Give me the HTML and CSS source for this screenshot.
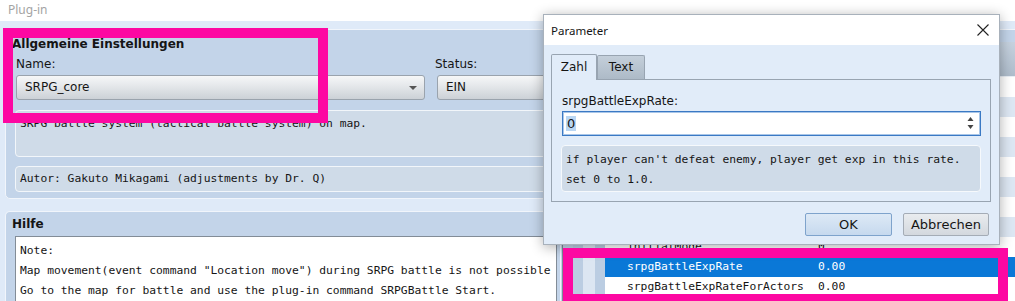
FILE: index.html
```html
<!DOCTYPE html>
<html lang="de">
<head>
  <meta charset="UTF-8">
  <title>Plug-in</title>
  <link rel="stylesheet" href="styles.css">
</head>
<body>
  <div class="titlebar">Plug-in</div>

  <div class="main">
    <div class="left">
      <section class="panel general">
        <h2>Allgemeine Einstellungen</h2>
        <div class="fields">
          <div class="field name-field">
            <label>Name:</label>
            <div class="combo">SRPG_core<span class="arrow"></span></div>
          </div>
          <div class="field status-field">
            <label>Status:</label>
            <div class="combo">EIN</div>
          </div>
        </div>
        <div class="textbox desc">SRPG battle system (tactical battle system) on map.</div>
        <div class="textbox author">Autor: Gakuto Mikagami (adjustments by Dr. Q)</div>
      </section>

      <section class="panel help">
        <h2>Hilfe</h2>
        <div class="helptext">
          <div>Note:</div>
          <div>Map movement(event command "Location move") during SRPG battle is not possible</div>
          <div>Go to the map for battle and use the plug-in command SRPGBattle Start.</div>
        </div>
      </section>
    </div>

    <div class="right">
      <div class="list">
        <div class="list-head"></div>
        <div class="row"><span class="c1"></span><span class="c2"></span><span class="c3"></span><span class="c4"></span><span class="pname"></span><span class="pval"></span></div>
        <div class="row"><span class="c1"></span><span class="c2"></span><span class="c3"></span><span class="c4"></span><span class="pname"></span><span class="pval"></span></div>
        <div class="row"><span class="c1"></span><span class="c2"></span><span class="c3"></span><span class="c4"></span><span class="pname"></span><span class="pval"></span></div>
        <div class="row"><span class="c1"></span><span class="c2"></span><span class="c3"></span><span class="c4"></span><span class="pname"></span><span class="pval"></span></div>
        <div class="row"><span class="c1"></span><span class="c2"></span><span class="c3"></span><span class="c4"></span><span class="pname"></span><span class="pval"></span></div>
        <div class="row"><span class="c1"></span><span class="c2"></span><span class="c3"></span><span class="c4"></span><span class="pname"></span><span class="pval"></span></div>
        <div class="row"><span class="c1"></span><span class="c2"></span><span class="c3"></span><span class="c4"></span><span class="pname"></span><span class="pval"></span></div>
        <div class="row"><span class="c1"></span><span class="c2"></span><span class="c3"></span><span class="c4"></span><span class="pname"></span><span class="pval"></span></div>
        <div class="row"><span class="c1"></span><span class="c2"></span><span class="c3"></span><span class="c4"></span><span class="pname">initialMode</span><span class="pval">0</span></div>
        <div class="row selected"><span class="c1"></span><span class="c2"></span><span class="c3"></span><span class="c4"></span><span class="pname">srpgBattleExpRate</span><span class="pval">0.00</span></div>
        <div class="row"><span class="c1"></span><span class="c2"></span><span class="c3"></span><span class="c4"></span><span class="pname">srpgBattleExpRateForActors</span><span class="pval">0.00</span></div>
      </div>
    </div>
  </div>

  <div class="dialog">
    <div class="dialog-title">
      <span>Parameter</span>
      <svg class="close" width="12" height="12" viewBox="0 0 12 12">
        <path d="M0.5 0.5 L11.5 11.5 M11.5 0.5 L0.5 11.5" stroke="#222" stroke-width="1.1" fill="none"/>
      </svg>
    </div>
    <div class="dialog-body">
      <div class="tabs">
        <div class="tab active">Zahl</div>
        <div class="tab">Text</div>
      </div>
      <div class="tab-panel">
        <div class="param-label">srpgBattleExpRate:</div>
        <div class="spin">
          <span class="spin-value">0</span>
          <span class="spin-arrows">
            <svg width="7" height="14" viewBox="0 0 7 14">
              <path d="M3.5 1 L6.5 5 L0.5 5 Z M0.5 9 L6.5 9 L3.5 13 Z" fill="#444"/>
            </svg>
          </span>
        </div>
        <div class="note">
          <div>if player can't defeat enemy, player get exp in this rate.</div>
          <div>set 0 to 1.0.</div>
        </div>
      </div>
      <div class="buttons">
        <button class="btn ok">OK</button>
        <button class="btn">Abbrechen</button>
      </div>
    </div>
  </div>

  <div class="mark mark-name"></div>
  <div class="mark mark-row"></div>
</body>
</html>
```

FILE: styles.css
```css
* { box-sizing: border-box; }

body {
  margin: 0;
  width: 1015px;
  height: 301px;
  overflow: hidden;
  position: relative;
  font-family: 'DejaVu Sans', sans-serif;
  font-size: 12px;
  color: #151515;
  background: #dfeaf8;
}

.titlebar {
  height: 21px;
  padding-left: 8px;
  line-height: 20px;
  background: #fff;
  color: #a4a4a4;
  font-family: 'Noto Sans', sans-serif;
  font-size: 12px;
}

.main {
  display: flex;
  padding: 8px 0 0 5px;
}

.left {
  width: 556px;
  display: flex;
  flex-direction: column;
  gap: 12px;
}

.panel {
  background: #c3d4e9;
  border: 1px solid #f1f5fb;
  border-radius: 5px;
  padding: 6px 4px 0 9px;
}

.panel h2 {
  margin: 0 0 4px -3px;
  font-size: 12px;
  line-height: 16px;
  font-weight: bold;
}

.general { height: 170px; }

.fields {
  display: flex;
  gap: 10px;
}

.field label {
  display: block;
  line-height: 16px;
  margin-bottom: 3px;
}

.name-field { width: 410px; padding-left: 1px; }
.status-field { flex: 1; }
.status-field .combo { margin-left: 2px; }

.combo {
  position: relative;
  height: 25px;
  padding-left: 8px;
  line-height: 23px;
  border: 1px solid #9aa3ad;
  border-radius: 3px;
  background: linear-gradient(#f6f7f8, #e4e7ea 45%, #ccd1d7);
}

.arrow {
  position: absolute;
  right: 7px;
  top: 10px;
  border-left: 4px solid transparent;
  border-right: 4px solid transparent;
  border-top: 4px solid #555;
}

.textbox {
  background: #cfdbe8;
  border: 1px solid #f2f6fa;
  border-radius: 4px;
  padding: 3px 4px;
  font-family: 'DejaVu Sans Mono', monospace;
  font-size: 11.3px;
  line-height: 20px;
  white-space: nowrap;
  overflow: hidden;
}

.desc { margin-top: 10px; height: 47px; }
.author { margin-top: 9px; height: 26px; padding-top: 2px; }

.help {
  flex: 1;
  height: 100px;
  padding-top: 4px;
  padding-right: 3px;
  border-bottom: none;
  border-radius: 5px 5px 0 0;
}

.helptext {
  height: 70px;
  background: #fff;
  border: 1px solid #828c97;
  border-bottom: none;
  padding: 4px 4px 0;
  font-family: 'DejaVu Sans Mono', monospace;
  font-size: 11.3px;
  line-height: 20px;
  white-space: nowrap;
  overflow: hidden;
}

.right {
  flex: 1;
  height: 272px;
  background: #c3d4e9;
  border-top: 1px solid #f1f5fb;
  padding: 12px 0 0 1px;
}

.list {
  height: 100%;
  background: #fff;
  border-left: 1px solid #7e8893;
}

.list-head {
  height: 35px;
  background: linear-gradient(#c6d2df, #aebccb);
  border-bottom: 1px solid #e8eef5;
}

.row {
  display: flex;
  height: 20px;
  line-height: 20px;
  font-family: 'DejaVu Sans Mono', monospace;
  font-size: 11.3px;
  white-space: nowrap;
}

.row:nth-child(odd) { background: #dde7f3; }

.c1 { width: 10px; background: #c3d4e9; }
.c2 { width: 10px; background: #bbcde2; }
.c3 { width: 12px; background: #dce6f2; }
.c4 { width: 10px; background: #bbcde2; }

.pname { width: 213px; padding-left: 22px; }

.row.selected .pname,
.row.selected .pval {
  background: #0a78d7;
  color: #fff;
}

.row.selected .pval { flex: 1; }

.dialog {
  position: absolute;
  left: 543px;
  top: 14px;
  width: 457px;
  height: 231px;
  border: 1px solid #a8b1bb;
  background: #e1ecf9;
  box-shadow: 0 2px 12px rgba(0, 0, 0, 0.32);
}

.dialog-title {
  height: 30px;
  display: flex;
  align-items: center;
  justify-content: space-between;
  padding: 0 10px 0 7px;
  background: #fff;
  font-family: 'Noto Sans', sans-serif;
  font-size: 11.5px;
}

.dialog-body { padding: 9px 8px 0 7px; }

.tabs {
  display: flex;
  align-items: flex-end;
  height: 25px;
}

.tab {
  width: 48px;
  height: 24px;
  line-height: 22px;
  text-align: center;
  border: 1px solid #98a4b1;
  border-bottom: none;
  border-radius: 2px 2px 0 0;
  background: linear-gradient(#c4cfda, #adbac7);
}

.tab.active {
  width: 46px;
  height: 26px;
  line-height: 25px;
  margin-bottom: -1px;
  position: relative;
  z-index: 1;
  background: #e1ecf9;
}

.tab-panel {
  height: 123px;
  border: 1px solid #98a4b1;
  padding: 13px 9px 0 10px;
}

.param-label {
  line-height: 16px;
  margin-bottom: 2px;
}

.spin {
  position: relative;
  height: 25px;
  background: #fff;
  border: 1px solid #3a79c4;
  box-shadow: inset 0 0 0 1px #a9c6e8;
  padding-left: 3px;
  font-size: 13px;
  line-height: 23px;
}

.spin-value {
  background: #b9d6f3;
  padding: 0 1px;
}

.spin-arrows {
  position: absolute;
  right: 6px;
  top: 4px;
  line-height: 0;
}

.note {
  margin: 9px 0 0 -1px;
  height: 47px;
  background: #cfdbe8;
  border: 1px solid #f6f9fc;
  border-radius: 4px;
  padding: 4px 4px;
  font-family: 'DejaVu Sans Mono', monospace;
  font-size: 11.3px;
  line-height: 20px;
  white-space: nowrap;
}

.buttons {
  display: flex;
  justify-content: flex-end;
  gap: 11px;
  margin: 11px 2px 0 0;
}

.btn {
  width: 86px;
  height: 23px;
  padding: 0;
  font-family: 'DejaVu Sans', sans-serif;
  font-size: 13px;
  color: #151515;
  border: 1px solid #a4acb6;
  border-radius: 2px;
  background: linear-gradient(#e9ecef, #d3d8de);
}

.btn.ok {
  width: 87px;
  border-color: #7ea3cc;
  background: linear-gradient(#dde9f6, #c6d9ee);
}

.mark {
  position: absolute;
  border: 10px solid #fd08a2;
}

.mark-name {
  left: 3px;
  top: 28px;
  width: 325px;
  height: 95px;
}

.mark-row {
  left: 563px;
  top: 248px;
  width: 445px;
  height: 56px;
}
```
